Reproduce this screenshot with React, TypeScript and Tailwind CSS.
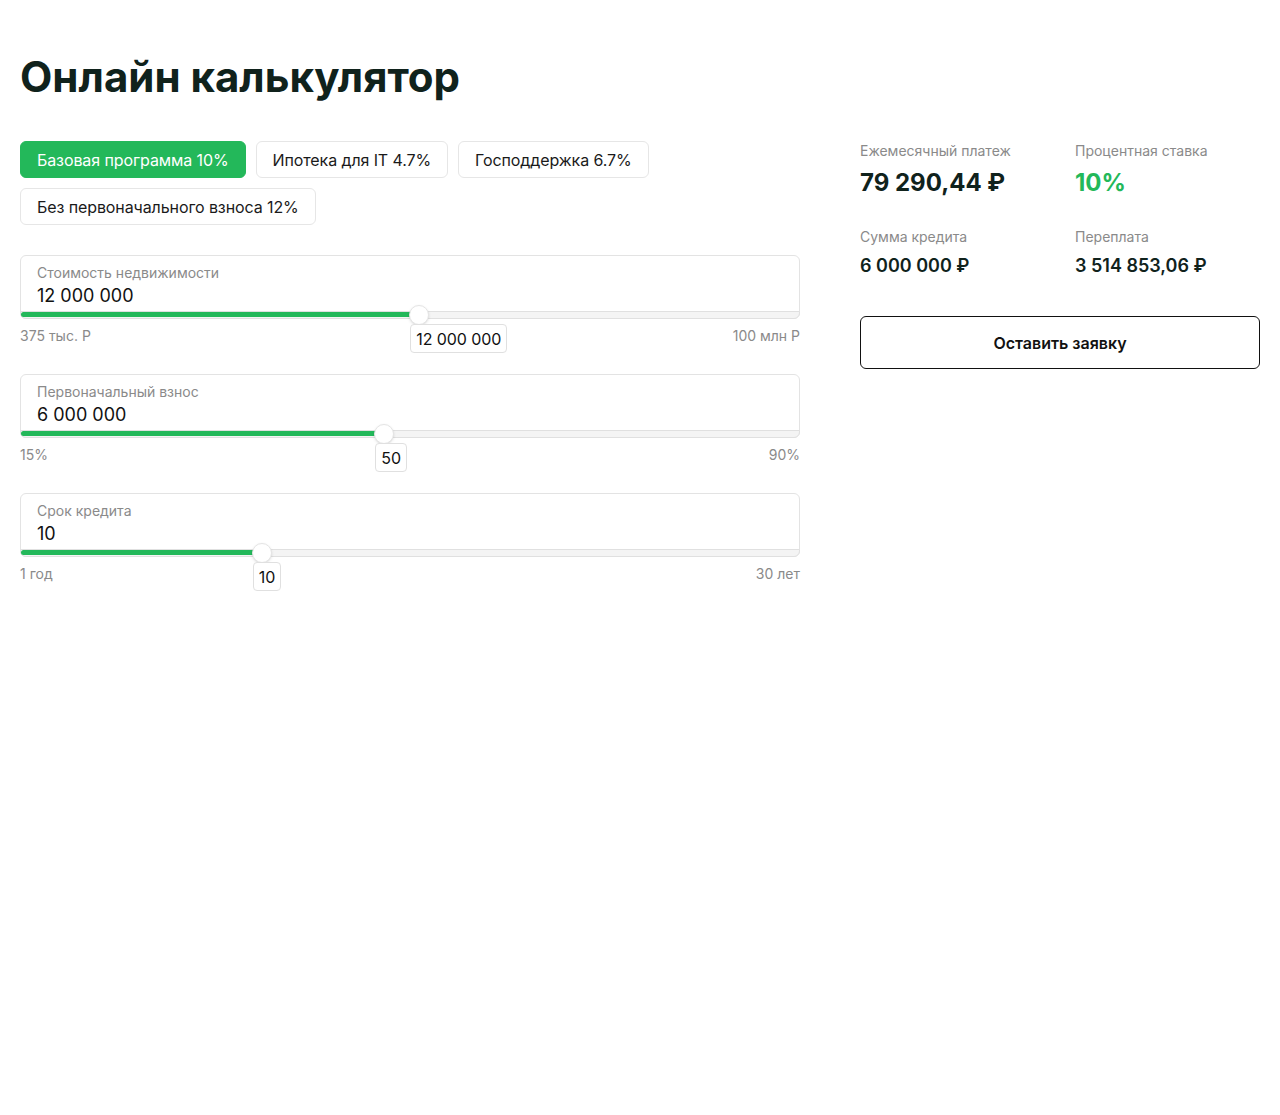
import * as React from "react"

const programs = [
    { label: "Базовая программа 10%", active: true },
    { label: "Ипотека для IT 4.7%", active: false },
    { label: "Господдержка 6.7%", active: false },
    { label: "Без первоначального взноса 12%", active: false },
]

interface SliderFieldProps {
    label: string;
    value: string;
    bubble: string;
    min: string;
    max: string;
    percent: number;
}

function SliderField({ label, value, bubble, min, max, percent }: SliderFieldProps) {
    return (
        <div className="relative">
            <div className="h-[64px] rounded-md border border-[#e3e3e3] px-4 pt-[7px]">
                <div className="text-sm leading-5 text-[#8a8a8a]">{label}</div>
                <div className="mt-[1px] text-[18px] leading-6 text-[#111]">{value}</div>
            </div>
            <div className="absolute left-0 right-0 top-[56px] h-[8px] rounded-b-md border border-[#e0e0e0] bg-[#f4f4f4]">
                <div
                    className="absolute left-0 top-[0px] h-[5px] rounded-full bg-[#23b85a]"
                    style={{ width: `${percent}%` }}
                />
                <div
                    className="absolute top-[-7px] h-5 w-5 -translate-x-1/2 rounded-full border border-[#e5e5e5] bg-white shadow-sm"
                    style={{ left: `${percent}%` }}
                />
            </div>
            <div className="relative flex h-[55px] items-start justify-between pt-[7px] text-sm leading-5 text-[#8a8a8a]">
                <span>{min}</span>
                <span>{max}</span>
                <div
                    className="absolute top-[5px] h-[29px] -translate-x-[9px] rounded-sm border border-[#e0e0e0] bg-white px-[5px] text-base leading-[28px] tracking-[-0.1px] text-[#111]"
                    style={{ left: `${percent}%` }}
                >
                    {bubble}
                </div>
            </div>
        </div>
    )
}

export default function App() {
    return (
        <div className="min-h-[1115px] bg-white px-5 pt-[52px] font-['Inter',sans-serif] text-[#111]">
            <h1 className="text-[42px] font-bold leading-[50px] text-[#10221c]">
                Онлайн калькулятор
            </h1>
            <div className="mt-[39px] flex gap-[60px]">
                <div className="w-[780px]">
                    <div className="flex flex-wrap gap-[10px]">
                        {programs.map((p) => (
                            <button
                                key={p.label}
                                className={
                                    p.active
                                        ? "h-[37px] rounded-md border border-[#23b85a] bg-[#23b85a] px-4 text-base tracking-[-0.1px] text-white"
                                        : "h-[37px] rounded-md border border-[#e6e6e6] bg-white px-4 text-base tracking-[-0.1px] text-[#1a1a1a]"
                                }
                            >
                                {p.label}
                            </button>
                        ))}
                    </div>
                    <div className="mt-[30px]">
                        <SliderField
                            label="Стоимость недвижимости"
                            value="12 000 000"
                            bubble="12 000 000"
                            min="375 тыс. Р"
                            max="100 млн Р"
                            percent={51.2}
                        />
                        <SliderField
                            label="Первоначальный взнос"
                            value="6 000 000"
                            bubble="50"
                            min="15%"
                            max="90%"
                            percent={46.7}
                        />
                        <SliderField
                            label="Срок кредита"
                            value="10"
                            bubble="10"
                            min="1 год"
                            max="30 лет"
                            percent={31}
                        />
                    </div>
                </div>
                <div className="w-[400px]">
                    <div className="grid grid-cols-[215px_1fr] gap-y-[28px]">
                        <div>
                            <div className="text-sm leading-5 text-[#8a8a8a]">Ежемесячный платеж</div>
                            <div className="mt-[6px] text-2xl font-bold leading-8 text-[#10221c]">79 290,44 ₽</div>
                        </div>
                        <div>
                            <div className="text-sm leading-5 text-[#8a8a8a]">Процентная ставка</div>
                            <div className="mt-[6px] text-2xl font-bold leading-8 text-[#23b85a]">10%</div>
                        </div>
                        <div>
                            <div className="text-sm leading-5 text-[#8a8a8a]">Сумма кредита</div>
                            <div className="mt-[7px] text-[18px] font-semibold leading-6 text-[#10221c]">6 000 000 ₽</div>
                        </div>
                        <div>
                            <div className="text-sm leading-5 text-[#8a8a8a]">Переплата</div>
                            <div className="mt-[7px] text-[18px] font-semibold leading-6 text-[#10221c]">3 514 853,06 ₽</div>
                        </div>
                    </div>
                    <button className="mt-[38px] h-[53px] w-full rounded-md border border-[#111] bg-white text-base font-semibold text-[#111]">
                        Оставить заявку
                    </button>
                </div>
            </div>
        </div>
    )
}
